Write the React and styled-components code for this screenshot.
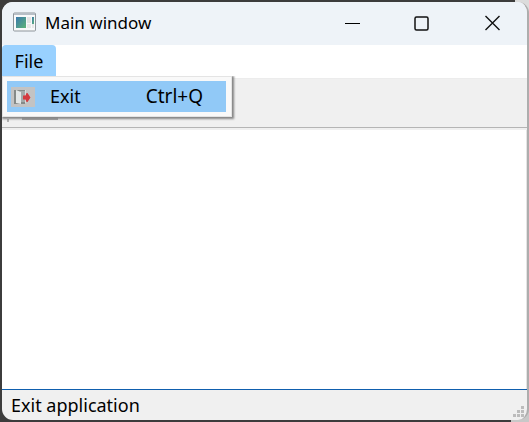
import React from "react";
import styled, { createGlobalStyle } from "styled-components";

const Global = createGlobalStyle`
  * { box-sizing: border-box; }
  body { margin: 0; background: #3c3c3c; }
  button, textarea { font: inherit; color: inherit; margin: 0; border: 0; padding: 0; background: none; }
`;

const Desktop = styled.div`
  display: flex;
  min-height: 100vh;
  padding: 2px 0 2px 2px;
  background: linear-gradient(to left, #dcdcdc 14px, #3c3c3c 14px) top / 100% 20px no-repeat,
    linear-gradient(to left, #c8c8c8 18px, #3c3c3c 18px);
  font-family: "Noto Sans", "Open Sans", sans-serif;
  font-size: 18px;
  color: #000;
`;

const Window = styled.main`
  flex: 1;
  display: flex;
  flex-direction: column;
  overflow: hidden;
  border-right: 2px solid #adadad;
  border-radius: 11px;
  background: #f0f0f0;
`;

const TitleBar = styled.header`
  display: flex;
  align-items: center;
  height: 43px;
  padding-left: 11px;
  gap: 8px;
  background: #eef3f8;
`;

const TitleIcon = styled.span`
  padding-bottom: 4px;
`;

const Title = styled.h1`
  flex: 1;
  margin: 0;
  padding-bottom: 2px;
  font-size: 17px;
  font-weight: 400;
  line-height: 24px;
`;

const CaptionButtons = styled.div`
  display: flex;
  align-self: stretch;
`;

const CaptionButton = styled.button`
  display: grid;
  place-items: center;
  width: 70px;
  padding-bottom: 2px;
`;

const MenuBar = styled.nav`
  position: relative;
  display: flex;
  height: 34px;
  padding-bottom: 1px;
  background: #fff;
  border-bottom: 1px solid #ececec;
`;

const MenuTitle = styled.button`
  width: 54px;
  border-radius: 4px 4px 0 0;
  background: #99d1ff;
  line-height: 32px;
`;

const Menu = styled.div`
  position: absolute;
  z-index: 1;
  top: 31px;
  left: 0;
  width: 230px;
  padding: 4px 5px 4px 4px;
  border: 1px solid #e4e4e4;
  background: #f9f9f9;
  box-shadow: 1px 1px 2px 1px #858585;
  clip-path: inset(0 -5px -5px 0);
`;

const MenuItem = styled.button`
  display: flex;
  align-items: center;
  width: 100%;
  height: 31px;
  padding: 1px 23px 0 4px;
  background: #91c9f7;
  line-height: 26px;
`;

const ItemLabel = styled.span`
  flex: 1;
  padding: 0 0 2px 15px;
  text-align: left;
`;

const Shortcut = styled.span`
  padding-bottom: 2px;
  font-size: 19px;
`;

const ToolBar = styled.div`
  display: flex;
  height: 49px;
  padding: 5px 5px 7px;
  gap: 13px;
  border-bottom: 1px solid #b5b5b5;
`;

const Grip = styled.span`
  width: 2px;
  margin-bottom: -2px;
  background: repeating-linear-gradient(to top, #b0b0b0 0 3px, transparent 3px 5px);
`;

const ToolButton = styled.button`
  display: grid;
  place-items: center;
  width: 36px;
  background: #a0a0a0;
`;

const Editor = styled.textarea`
  display: block;
  flex: 1;
  width: 100%;
  margin-top: 2px;
  padding: 4px;
  resize: none;
  outline: none;
  background: #fff;
  border-right: 1px solid #e4e4e4;
`;

const StatusBar = styled.footer`
  display: flex;
  align-items: flex-end;
  justify-content: space-between;
  height: 31px;
  padding: 0 2px 0 9px;
  border-top: 1px solid #0f5fae;
  line-height: 30px;
`;

const Drawing = styled.svg`
  display: block;
  flex: none;
`;

const AppIcon = () => (
  <Drawing width="24" height="20" viewBox="0 0 24 20" aria-hidden="true">
    <defs>
      <linearGradient id="pane" x1="0" y1="0" x2="1" y2="1">
        <stop offset="0" stopColor="#3a78ad" />
        <stop offset="1" stopColor="#5eb477" />
      </linearGradient>
    </defs>
    <rect x="0.5" y="1" width="22" height="18" rx="1" fill="#f8f9fa" stroke="#8e959b" />
    <path d="M1 2h21" stroke="#b7bec6" strokeWidth="2" />
    <rect x="3" y="5" width="10" height="11" fill="url(#pane)" />
    <rect x="14" y="5" width="4" height="6" fill="#e4e4e4" />
    <rect x="14" y="12" width="4" height="4" fill="#e8e8e8" />
    <rect x="19" y="5" width="2" height="7" fill="url(#pane)" />
    <rect x="19" y="12" width="2" height="4" fill="#e8e8e8" />
  </Drawing>
);

const ExitIcon = () => (
  <Drawing width="24" height="20" viewBox="0 0 24 20" aria-hidden="true">
    <rect width="24" height="20" fill="#c3c3c3" />
    <rect x="3" y="3" width="11" height="14" fill="#858a88" />
    <rect x="9" y="4" width="5" height="11" fill="#a3aaaa" />
    <path d="M5 3l5 2v12l-5-1z" fill="#e3e7e7" />
    <path d="M14.5 3v13" stroke="#d8dbdb" />
    <path d="M12 8.500h2.500l1-2.500h1l3 4.500-3 4.500h-1l-1-2.500h-2.500z" fill="#d33a3f" />
  </Drawing>
);

export default function App() {
  return (
    <>
      <Global />
      <Desktop>
        <Window>
          <TitleBar>
            <TitleIcon>
              <AppIcon />
            </TitleIcon>
            <Title>Main window</Title>
            <CaptionButtons>
              <CaptionButton aria-label="Minimize">
                <Drawing width="16" height="16"><path d="M1 8.5h15" stroke="#000" /></Drawing>
              </CaptionButton>
              <CaptionButton aria-label="Maximize">
                <Drawing width="16" height="16">
                  <rect x="1" y="2" width="13" height="13" rx="1.5" fill="none" stroke="#111" strokeWidth="1.5" />
                </Drawing>
              </CaptionButton>
              <CaptionButton aria-label="Close">
                <Drawing width="16" height="16">
                  <path d="M1.500 1l14 14M15.500 1l-14 14" stroke="#111" strokeWidth="1.4" />
                </Drawing>
              </CaptionButton>
            </CaptionButtons>
          </TitleBar>
          <MenuBar>
            <MenuTitle aria-haspopup="menu" aria-expanded="true">File</MenuTitle>
            <Menu role="menu">
              <MenuItem role="menuitem">
                <ExitIcon />
                <ItemLabel>Exit</ItemLabel>
                <Shortcut>Ctrl+Q</Shortcut>
              </MenuItem>
            </Menu>
          </MenuBar>
          <ToolBar role="toolbar">
            <Grip />
            <ToolButton aria-label="Exit">
              <ExitIcon />
            </ToolButton>
          </ToolBar>
          <Editor aria-label="Text" />
          <StatusBar>
            <span>Exit application</span>
            <Drawing width="12" height="14" aria-hidden="true">
              <path
                d="M8 0h3v3h-3zM4 4h3v3h-3zM8 4h3v3h-3zM0 8h3v3h-3zM4 8h3v3h-3zM8 8h3v3h-3z"
                fill="#bcbcbc"
              />
            </Drawing>
          </StatusBar>
        </Window>
      </Desktop>
    </>
  );
}
